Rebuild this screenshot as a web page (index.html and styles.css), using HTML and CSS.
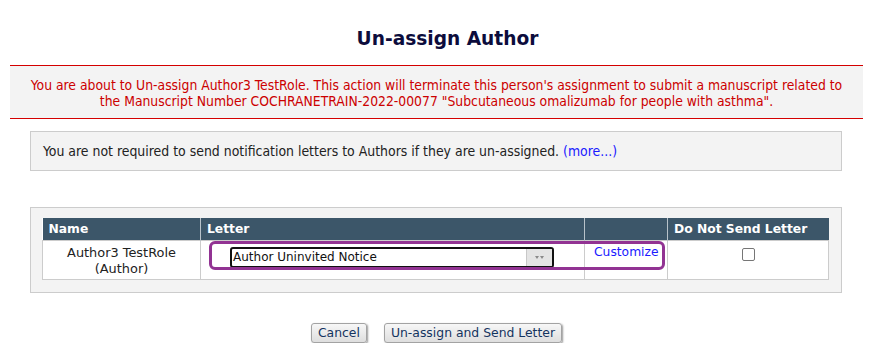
FILE: index.html
```html
<!DOCTYPE html>
<html>
<head>
<meta charset="utf-8">
<link rel="stylesheet" href="styles.css">
</head>
<body>
<h1 class="title">Un-assign Author</h1>
<div class="warning">You are about to Un-assign Author3 TestRole. This action will terminate this person's assignment to submit a manuscript related to<br>the Manuscript Number COCHRANETRAIN-2022-00077 "Subcutaneous omalizumab for people with asthma".</div>
<div class="info">You are not required to send notification letters to Authors if they are un-assigned. <a class="link" href="#">(more...)</a></div>
<div class="tablebox">
  <table class="grid">
    <thead>
      <tr>
        <th class="c-name">Name</th>
        <th class="c-letter">Letter</th>
        <th class="c-blank"></th>
        <th class="c-dns">Do Not Send Letter</th>
      </tr>
    </thead>
    <tbody>
      <tr>
        <td class="name">Author3 TestRole<br>(Author)</td>
        <td class="letter">
          <div class="select"><span class="select-text">Author Uninvited Notice</span><span class="select-arrow"><svg width="11" height="6" viewBox="0 0 11 6"><path d="M1 1h4l-2 3z M6 1h4l-2 3z" fill="#8a8a8a"/></svg></span></div>
        </td>
        <td class="cust"><a class="link" href="#">Customize</a></td>
        <td class="dns"><span class="checkbox"></span></td>
      </tr>
    </tbody>
  </table>
  <div class="focus-ring"></div>
</div>
<div class="buttons">
  <button class="btn">Cancel</button>
  <button class="btn">Un-assign and Send Letter</button>
</div>
</body>
</html>
```
FILE: styles.css
```css
html, body { margin: 0; padding: 0; background: #fff; }
body { width: 873px; font-family: "DejaVu Sans", Verdana, sans-serif; }

.title {
  margin: 0 0 15px 0;
  padding: 28px 0 0 22px;
  text-align: center;
  font-size: 18.6px;
  line-height: 22px;
  font-weight: bold;
  color: #0c0c3c;
}

.warning {
  margin: 0 10px;
  border-top: 1px solid #d40000;
  border-bottom: 1px solid #d40000;
  background: #f3f3f3;
  color: #cc0000;
  text-align: center;
  font-family: "DejaVu Sans Condensed", "DejaVu Sans", sans-serif;
  font-size: 13.8px;
  line-height: 16px;
  padding: 11px 0 9px;
}

.info {
  margin: 12px 31px 0 30px;
  border: 1px solid #cccccc;
  background: #f3f3f3;
  color: #222;
  font-family: "DejaVu Sans Condensed", "DejaVu Sans", sans-serif;
  font-size: 13.9px;
  line-height: 16px;
  padding: 11px 12px 11px;
}

.link { color: #1a1aff; text-decoration: none; }

.tablebox {
  position: relative;
  margin: 36px 31px 0 30px;
  border: 1px solid #cccccc;
  background: #f3f3f3;
  padding: 10px 11px 12px 11px;
}

.grid {
  border-collapse: collapse;
  width: 787px;
  table-layout: fixed;
  background: #fff;
}

.grid th {
  background: #3c5669;
  color: #fff;
  font-weight: bold;
  font-size: 12.3px;
  text-align: left;
  height: 22px;
  padding: 0 0 0 6px;
  border-left: 1px solid #b8c2ca;
  line-height: 22px;
  white-space: nowrap;
  box-sizing: border-box;
}
.grid th:first-child { border-left: none; }
.c-name { width: 158px; }
.c-letter { width: 384px; }
.c-blank { width: 83px; }

.grid td {
  border: 1px solid #cccccc;
  vertical-align: top;
  height: 39px;
  box-sizing: border-box;
  font-size: 12px;
  line-height: 16px;
  padding: 4px 0 0 0;
  color: #222;
}

.grid td.name { text-align: center; font-size: 12.9px; }
.grid td.letter { padding: 6px 0 0 29px; }

.select {
  display: flex;
  align-items: stretch;
  width: 324px;
  height: 21px;
  box-sizing: border-box;
  border: 2px solid #111;
  border-radius: 3px;
  background: #fff;
  overflow: hidden;
}
.select-text {
  flex: 1;
  font-size: 12px;
  line-height: 17px;
  padding-left: 1px;
  color: #111;
}
.select-arrow {
  width: 25px;
  background: #e4e4e4;
  border-left: 1px solid #c8c8c8;
  display: flex;
  align-items: center;
  justify-content: center;
}

.grid td.cust { padding: 3px 0 0 9px; font-size: 12.3px; }

.grid td.dns { text-align: center; padding-top: 7px; }
.checkbox {
  display: inline-block;
  width: 11px;
  height: 11px;
  border: 1px solid #767676;
  border-radius: 2px;
  background: #fff;
}

.focus-ring {
  position: absolute;
  left: 178px;
  top: 33px;
  width: 450px;
  height: 23px;
  border: 3px solid #923393;
  border-radius: 6px;
  pointer-events: none;
}

.buttons {
  display: flex;
  justify-content: center;
  gap: 17px;
  margin-top: 30px;
  padding-left: 0;
}
.btn {
  font-family: "DejaVu Sans", Verdana, sans-serif;
  font-size: 12.4px;
  color: #14345f;
  height: 20px;
  padding: 0 6px;
  border: 1px solid #a3a3a3;
  border-radius: 3px;
  background: linear-gradient(#f7f7f7, #dedede);
  box-shadow: 1px 1px 2px #9a9a9a;
  line-height: 16px;
}
```
